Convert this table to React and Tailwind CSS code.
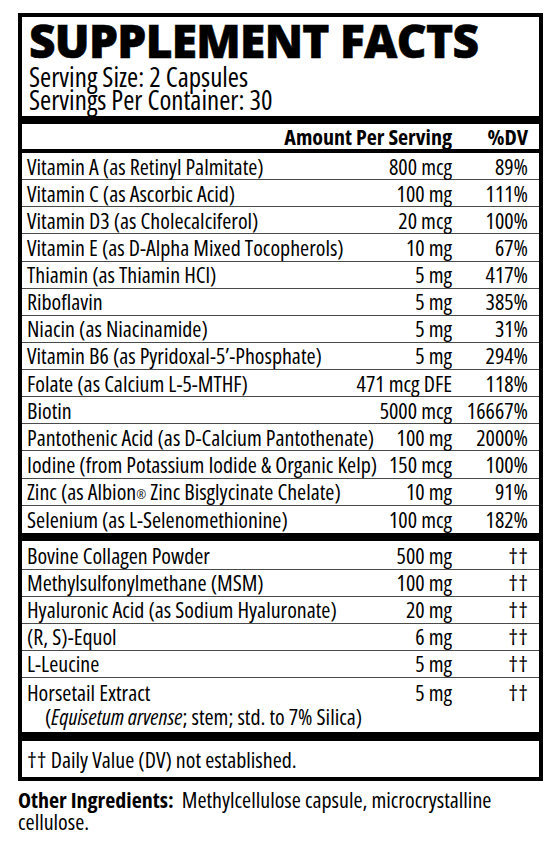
import React from 'react';

const vitamins = [
  ['Vitamin A (as Retinyl Palmitate)', '800 mcg', '89%'],
  ['Vitamin C (as Ascorbic Acid)', '100 mg', '111%'],
  ['Vitamin D3 (as Cholecalciferol)', '20 mcg', '100%'],
  ['Vitamin E (as D-Alpha Mixed Tocopherols)', '10 mg', '67%'],
  ['Thiamin (as Thiamin HCl)', '5 mg', '417%'],
  ['Riboflavin', '5 mg', '385%'],
  ['Niacin (as Niacinamide)', '5 mg', '31%'],
  ['Vitamin B6 (as Pyridoxal-5\u2019-Phosphate)', '5 mg', '294%'],
  ['Folate (as Calcium L-5-MTHF)', '471 mcg DFE', '118%'],
  ['Biotin', '5000 mcg', '16667%'],
  ['Pantothenic Acid (as D-Calcium Pantothenate)', '100 mg', '2000%'],
  ['Iodine (from Potassium Iodide & Organic Kelp)', '150 mcg', '100%'],
  [
    <>
      Zinc (as Albion<sup className="text-[12px] relative -top-[1px]">®</sup> Zinc Bisglycinate Chelate)
    </>,
    '10 mg',
    '91%',
  ],
  ['Selenium (as L-Selenomethionine)', '100 mcg', '182%'],
];

const others = [
  ['Bovine Collagen Powder', '500 mg'],
  ['Methylsulfonylmethane (MSM)', '100 mg'],
  ['Hyaluronic Acid (as Sodium Hyaluronate)', '20 mg'],
  ['(R, S)-Equol', '6 mg'],
  ['L-Leucine', '5 mg'],
];

const Row = ({ name, amount, dv, last, tall }) => (
  <div
    className={`flex items-center pl-[5px] pr-[11px] ${tall ? 'h-[27.14px]' : 'h-[27px]'} ${
      last ? '' : 'border-b border-[#4a4a4a]'
    }`}
  >
    <span className="flex-1 whitespace-nowrap">{name}</span>
    <span className="whitespace-nowrap text-right">{amount}</span>
    <span className="w-[76px] text-right whitespace-nowrap">{dv}</span>
  </div>
);

export default function App() {
  return (
    <div className="min-h-[845px] bg-white px-[18px] pt-[13px] text-black font-['Open_Sans',sans-serif] font-stretch-condensed">
      <div className="w-[525px] border-4 border-black">
        <div className="pl-[7px] pb-[5px]">
          <h1 className="text-[46px] leading-[46px] font-extrabold tracking-[-0.7px] font-stretch-normal [-webkit-text-stroke:0.6px_black]">
            SUPPLEMENT FACTS
          </h1>
          <div className="mt-[2px] text-[27px] leading-[23px]">
            <div>Serving Size: 2 Capsules</div>
            <div>Servings Per Container: 30</div>
          </div>
        </div>

        <div className="h-[8px] bg-black" />

        <div className="flex items-center h-[29px] pl-[5px] pr-[11px] text-[22px] font-bold border-b-4 border-black">
          <span className="flex-1" />
          <span>Amount Per Serving</span>
          <span className="w-[76px] text-right">%DV</span>
        </div>

        <div className="text-[22px]">
          {vitamins.map(([name, amount, dv], i) => (
            <Row key={i} tall name={name} amount={amount} dv={dv} last={i === vitamins.length - 1} />
          ))}
        </div>

        <div className="h-[8px] bg-black" />

        <div className="text-[22px] pt-[2px]">
          {others.map(([name, amount], i) => (
            <Row key={i} name={name} amount={amount} dv="††" />
          ))}
          <div className="pl-[5px] pr-[11px] pt-[2px] pb-[4px] leading-[24px]">
            <div className="flex">
              <span className="flex-1">Horsetail Extract</span>
              <span>5 mg</span>
              <span className="w-[76px] text-right">††</span>
            </div>
            <div className="pl-[18px]">
              (<i>Equisetum arvense</i>; stem; std. to 7% Silica)
            </div>
          </div>
        </div>

        <div className="h-[9px] bg-black" />

        <div className="h-[36px] flex items-center pl-[5px] pt-[2px] text-[22px]">
          †† Daily Value (DV) not established.
        </div>
      </div>

      <p className="mt-[7px] text-[22px] leading-[22px] w-[525px]">
        <span className="font-bold">Other Ingredients:</span>&nbsp; Methylcellulose capsule, microcrystalline
        cellulose.
      </p>
    </div>
  );
}
